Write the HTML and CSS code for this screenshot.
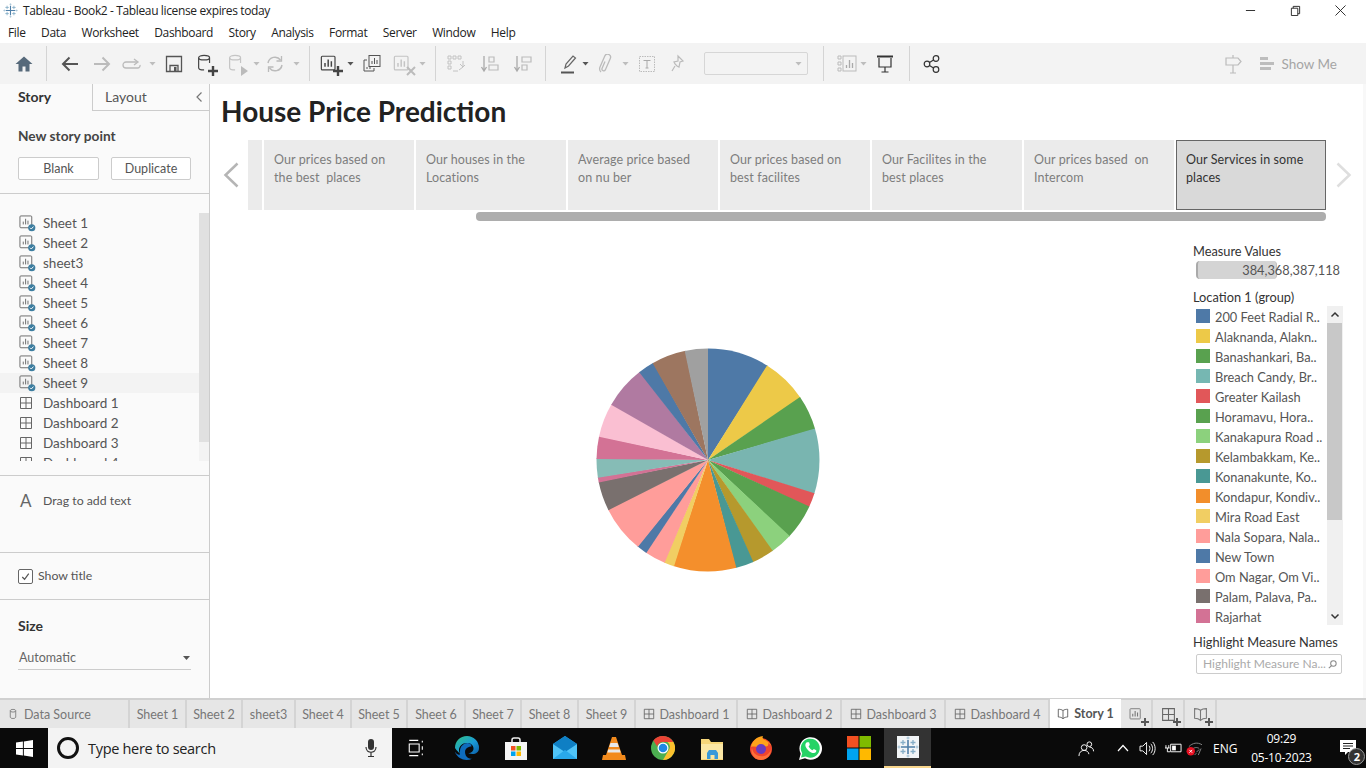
FILE: index.html
```html
<!DOCTYPE html>
<html lang="en">
<head>
<meta charset="utf-8">
<title>Tableau - Book2</title>
<link rel="stylesheet" href="styles.css">
</head>
<body>
<svg class="sprite" aria-hidden="true">
  <symbol id="sheet" viewBox="0 0 18 18"><rect x="1" y="1" width="12.5" height="12.5" rx="1" fill="none" stroke="#666"/><path d="M4.500 10V7M7 10V4M9.500 10V6" stroke="#666" fill="none"/><circle cx="13.500" cy="13.500" r="3.800" fill="#3d7ea0"/><path d="M11.700 13.500l1.300 1.300 2.300-2.500" stroke="#fff" fill="none"/></symbol>
  <symbol id="dash" viewBox="0 0 14 14"><path d="M1.500 1.500h11v11h-11zM7 1.500v11M1.500 7h11" fill="none" stroke="#666"/></symbol>
  <symbol id="ds" viewBox="0 0 20 22"><ellipse cx="9" cy="4" rx="6" ry="2.500" fill="none" stroke="currentColor" stroke-width="1.300"/><path d="M3 4v11c0 1.400 2.700 2.500 6 2.500M15 4v6" fill="none" stroke="currentColor" stroke-width="1.300"/></symbol>
  <symbol id="chart" viewBox="0 0 22 22"><rect x="1.500" y="2.500" width="15" height="15" rx="1" fill="none" stroke="currentColor" stroke-width="1.300"/><path d="M5.500 14V10M9 14V6M12.500 14V8" stroke="currentColor" stroke-width="1.600" fill="none"/></symbol>
  <symbol id="plus" viewBox="0 0 10 10"><path d="M5 0v10M0 5h10" stroke="currentColor" stroke-width="2.400" fill="none"/></symbol>
  <symbol id="book" viewBox="0 0 14 14"><path d="M7 3C5.500 1.800 3.500 1.500 1.500 1.500v9c2 0 4 .5 5.500 2 1.500-1.500 3.500-2 5.500-2v-9C10.500 1.500 8.500 1.800 7 3zM7 3v9.500" fill="none" stroke="currentColor"/></symbol>
  <symbol id="tlogo" viewBox="0 0 22 22"><path d="M11 4v14M4 11h14" stroke="#4f7fa8" stroke-width="1.600"/><path d="M6 4v5M3.500 6.500h5M16 4v5M13.500 6.500h5M6 13v5M3.500 15.500h5M16 13v5M13.500 15.500h5" stroke="#86aec8" stroke-width="1.300"/><path d="M11 .5v3M9.500 2h3M11 18.500v3M9.500 20h3M.5 11h3M2 9.500v3M18.500 11h3M20 9.500v3" stroke="#9fbfd3" stroke-width="1"/></symbol>
</svg>

<header class="titlebar">
  <svg class="app-logo" viewBox="0 0 22 22"><use href="#tlogo"/></svg>
  <span class="app-title">Tableau - Book2 - Tableau license expires today</span>
  <div class="winctl">
    <svg viewBox="0 0 12 12"><path d="M1 6h10" stroke="#222"/></svg>
    <svg viewBox="0 0 12 12"><path d="M1.500 3.500h7v8h-7zM3.500 3.500v-2h7v8h-2" fill="none" stroke="#222"/></svg>
    <svg viewBox="0 0 12 12"><path d="M.5 .5l11 11M11.500 .5l-11 11" stroke="#222"/></svg>
  </div>
</header>

<nav class="menubar">
  <span>File</span><span>Data</span><span>Worksheet</span><span>Dashboard</span><span>Story</span><span>Analysis</span><span>Format</span><span>Server</span><span>Window</span><span>Help</span>
</nav>

<div class="toolbar">
  <svg class="ti" viewBox="0 0 20 20"><path d="M10 2.500L1.500 10H4.500v7.500h4v-5h3v5h4V10h3z" fill="#56697a"/></svg>
  <i class="sep ml12"></i>
  <svg class="ti ml13" viewBox="0 0 20 20"><path d="M18 10H3M9.500 3.500L3 10l6.500 6.500" fill="none" stroke="#555" stroke-width="2"/></svg>
  <svg class="ti ml12" viewBox="0 0 20 20"><path d="M2 10h15M10.500 3.500L17 10l-6.500 6.500" fill="none" stroke="#bbb" stroke-width="2"/></svg>
  <svg class="ti ml10" viewBox="0 0 20 20"><path d="M15 8H4a2.500 2.500 0 0 0 0 6h12a2.500 2.500 0 0 0 2-3" fill="none" stroke="#bbb" stroke-width="1.300"/><path d="M12 5l4 3-4 3" fill="none" stroke="#bbb" stroke-width="1.300"/></svg>
  <i class="caret ml7"></i>
  <svg class="ti ml8" viewBox="0 0 20 20"><path d="M2.500 2.500h15v15h-15zM6 17.500v-6h8v6" fill="none" stroke="#555" stroke-width="1.300"/><path d="M10 13h2.500v4H10z" fill="#555"/></svg>
  <span class="stack ml11 dark"><svg class="ti" viewBox="0 0 20 22"><use href="#ds"/></svg><svg class="plus" viewBox="0 0 10 10"><use href="#plus"/></svg></span>
  <span class="stack ml11 faint"><svg class="ti" viewBox="0 0 20 22"><use href="#ds"/></svg><svg class="plus" viewBox="0 0 10 10"><path d="M2 0l7 5-7 5z" fill="#bbb"/></svg></span>
  <i class="caret ml7"></i>
  <svg class="ti ml5" viewBox="0 0 20 20"><path d="M3 9a7 7 0 0 1 12.500-3M17 11A7 7 0 0 1 4.500 14" fill="none" stroke="#bbb" stroke-width="1.500"/><path d="M16.500 2v5h-5M3.500 18v-5h5" fill="none" stroke="#bbb" stroke-width="1.300"/></svg>
  <i class="caret ml8"></i>
  <i class="sep ml9"></i>
  <span class="stack ml10 dark"><svg class="ti" viewBox="0 0 22 22"><use href="#chart"/></svg><svg class="plus" viewBox="0 0 10 10"><use href="#plus"/></svg></span>
  <i class="caret dk ml7"></i>
  <svg class="ti ml8" viewBox="0 0 20 20"><rect x="7" y="1.500" width="11" height="11" fill="#f3f3f3" stroke="#555"/><path d="M10 10V7M12.500 10V4M15 10V6" stroke="#555"/><path d="M5 6H2v11h10v-3" fill="none" stroke="#555"/><path d="M5 15v-2M8 15v-3" stroke="#555"/></svg>
  <span class="stack ml11 faint"><svg class="ti" viewBox="0 0 22 22"><use href="#chart"/></svg><svg class="plus" viewBox="0 0 10 10"><path d="M1 1l8 8M9 1l-8 8" stroke="#bbb" stroke-width="2"/></svg></span>
  <i class="caret ml6"></i>
  <i class="sep ml9"></i>
  <svg class="ti ml10" viewBox="0 0 20 20"><path d="M2 2h3v3H2zM7 2h3v3H7zM12 2h3v3h-3zM2 7h3v3H2zM2 12h3v3H2zM12 17h-5M17 7v6l-4 3M14 10l3 3 2-2" fill="none" stroke="#c2c2c2"/></svg>
  <svg class="ti ml14" viewBox="0 0 20 20"><path d="M4 2v14M1.500 13L4 17l2.500-4" fill="none" stroke="#aaa" stroke-width="1.300"/><path d="M9 3h5v5H9zM9 11h9v5H9z" fill="none" stroke="#bbb" stroke-width="1.200"/></svg>
  <svg class="ti ml13" viewBox="0 0 20 20"><path d="M4 2v14M1.500 13L4 17l2.500-4" fill="none" stroke="#aaa" stroke-width="1.300"/><path d="M9 3h9v5H9zM9 11h5v5H9z" fill="none" stroke="#bbb" stroke-width="1.200"/></svg>
  <i class="sep ml12"></i>
  <svg class="ti ml12" viewBox="0 0 20 20"><path d="M7 14l1-4 7-8 2.500 2-7 8z" fill="none" stroke="#666" stroke-width="1.200"/><path d="M3 18.500h13" stroke="#555" stroke-width="2"/></svg>
  <i class="caret dk ml4"></i>
  <svg class="ti ml6" viewBox="0 0 20 20"><path d="M8 8.500l-3 7a1.800 1.800 0 0 0 3.300 1.400l5-11.500a3 3 0 0 0-5.500-2.400L3 14a4.600 4.600 0 0 0 1 5" fill="none" stroke="#bbb" stroke-width="1.300" transform="translate(2 -1)"/></svg>
  <i class="caret ml7"></i>
  <svg class="ti ml8" viewBox="0 0 20 20"><rect x="2.500" y="2.500" width="15" height="15" fill="none" stroke="#bbb" stroke-dasharray="1.500 1"/><path d="M6.500 6.500h7M10 6.500v7.500M8.500 14h3" fill="none" stroke="#aaa"/></svg>
  <svg class="ti ml10" viewBox="0 0 20 20"><path d="M11 2l5 5-3 1-1 5-2-1-2-2-1-2 4-1 z M8 12l-3 5" fill="none" stroke="#bbb" stroke-width="1.200"/></svg>
  <div class="tselect ml17"><i class="caret"></i></div>
  <i class="sep ml15"></i>
  <svg class="ti ml13" viewBox="0 0 20 20"><path d="M1 2h3v3H1zM1 8h3v3H1zM1 14h3v3H1z" fill="none" stroke="#bbb"/><rect x="6" y="2" width="13" height="15" fill="none" stroke="#bbb"/><path d="M9.500 14v-3M12.500 14V6M15.500 14V9" stroke="#aaa" stroke-width="1.300"/></svg>
  <i class="caret ml3"></i>
  <svg class="ti ml8" viewBox="0 0 20 20"><path d="M2 2.500h16" stroke="#333" stroke-width="2"/><path d="M4 4v9h12V4M10 13v5M6.500 18h7" fill="none" stroke="#333" stroke-width="1.200"/></svg>
  <i class="sep ml14"></i>
  <svg class="ti ml12" viewBox="0 0 20 20"><circle cx="5" cy="10" r="2.800" fill="none" stroke="#333" stroke-width="1.200"/><circle cx="14" cy="4.500" r="2.800" fill="none" stroke="#333" stroke-width="1.200"/><circle cx="14" cy="15.500" r="2.800" fill="none" stroke="#333" stroke-width="1.200"/><path d="M7.500 8.500l4-2.500M7.500 11.500l4 2.500" stroke="#333" stroke-width="1.200"/></svg>
  <div class="tb-right">
    <svg class="ti" viewBox="0 0 20 20"><path d="M10 1v3M3 4h12l3 3.500L15 11H3zM10 11v8M7 19h6" fill="none" stroke="#bbb" stroke-width="1.200"/></svg>
    <svg class="ti ml14" viewBox="0 0 20 20"><path d="M3 3h8v3H3zM3 8h14v3H3zM3 13h11v3H3z" fill="#bdbdbd"/></svg>
    <span class="showme">Show Me</span>
  </div>
</div>

<div class="workspace">
  <aside class="panel">
    <div class="ptabs">
      <div class="ptab active">Story</div>
      <div class="ptab other">Layout<svg class="collapse" viewBox="0 0 8 12"><path d="M6.500 1.500L2 6l4.500 4.500" fill="none" stroke="#777" stroke-width="1.200"/></svg></div>
    </div>
    <section class="newpoint">
      <h3>New story point</h3>
      <div class="btns"><button class="btn">Blank</button><button class="btn">Duplicate</button></div>
    </section>
    <section class="sheets">
      <ul class="sheetlist">
        <li><svg class="sic" viewBox="0 0 18 18"><use href="#sheet"/></svg>Sheet 1</li>
        <li><svg class="sic" viewBox="0 0 18 18"><use href="#sheet"/></svg>Sheet 2</li>
        <li><svg class="sic" viewBox="0 0 18 18"><use href="#sheet"/></svg>sheet3</li>
        <li><svg class="sic" viewBox="0 0 18 18"><use href="#sheet"/></svg>Sheet 4</li>
        <li><svg class="sic" viewBox="0 0 18 18"><use href="#sheet"/></svg>Sheet 5</li>
        <li><svg class="sic" viewBox="0 0 18 18"><use href="#sheet"/></svg>Sheet 6</li>
        <li><svg class="sic" viewBox="0 0 18 18"><use href="#sheet"/></svg>Sheet 7</li>
        <li><svg class="sic" viewBox="0 0 18 18"><use href="#sheet"/></svg>Sheet 8</li>
        <li class="hover"><svg class="sic" viewBox="0 0 18 18"><use href="#sheet"/></svg>Sheet 9</li>
        <li><svg class="dic" viewBox="0 0 14 14"><use href="#dash"/></svg>Dashboard 1</li>
        <li><svg class="dic" viewBox="0 0 14 14"><use href="#dash"/></svg>Dashboard 2</li>
        <li><svg class="dic" viewBox="0 0 14 14"><use href="#dash"/></svg>Dashboard 3</li>
        <li><svg class="dic" viewBox="0 0 14 14"><use href="#dash"/></svg>Dashboard 4</li>
      </ul>
      <div class="vscroll"><div class="vthumb"></div></div>
    </section>
    <section class="dragtext"><span class="biga">A</span>Drag to add text</section>
    <section class="showtitle"><span class="check"><svg viewBox="0 0 14 14"><path d="M3.500 7.500l2.500 2.500 4.500-6" fill="none" stroke="#555" stroke-width="1.300"/></svg></span><span class="cap">Show title</span></section>
    <section class="size">
      <h3>Size</h3>
      <div class="sizesel">Automatic<i class="caret dk"></i></div>
    </section>
  </aside>

  <main class="main">
    <h1 class="story-title">House Price Prediction</h1>
    <div class="navigator">
      <svg class="arrow" viewBox="0 0 16 26"><path d="M14.500 1.500L2.500 13l12 11.500" fill="none" stroke="#b5b5b5" stroke-width="2.500"/></svg>
      <div class="tilewrap">
        <div class="tiles">
          <div class="tile stub"></div>
          <div class="tile">Our prices based on the best&nbsp; places</div>
          <div class="tile">Our houses in the Locations</div>
          <div class="tile">Average price based on nu ber</div>
          <div class="tile">Our prices based on best facilites</div>
          <div class="tile">Our Facilites in the best places</div>
          <div class="tile">Our prices based&nbsp; on Intercom</div>
          <div class="tile current">Our Services in some places</div>
        </div>
        <div class="hscroll"></div>
      </div>
      <svg class="arrow right" viewBox="0 0 16 26"><path d="M1.500 1.500L13.500 13l-12 11.500" fill="none" stroke="#dedede" stroke-width="2.500"/></svg>
    </div>
    <div class="content">
      <div class="chart">
        <svg class="pie" viewBox="0 0 224 224" role="img" aria-label="Pie chart">
          <g class="slices">
            <circle pathLength="360" class="blue" stroke-dasharray="32.4 360" stroke-dashoffset="0"/>
            <circle pathLength="360" class="yellow" stroke-dasharray="24 360" stroke-dashoffset="-32"/>
            <circle pathLength="360" class="green" stroke-dasharray="18.3 360" stroke-dashoffset="-55.6"/>
            <circle pathLength="360" class="teal" stroke-dasharray="34.3 360" stroke-dashoffset="-73.5"/>
            <circle pathLength="360" class="red" stroke-dasharray="7.7 360" stroke-dashoffset="-107.4"/>
            <circle pathLength="360" class="green" stroke-dasharray="18.6 360" stroke-dashoffset="-114.7"/>
            <circle pathLength="360" class="lgreen" stroke-dasharray="12 360" stroke-dashoffset="-132.9"/>
            <circle pathLength="360" class="olive" stroke-dasharray="11.9 360" stroke-dashoffset="-144.5"/>
            <circle pathLength="360" class="dteal" stroke-dasharray="9.6 360" stroke-dashoffset="-156"/>
            <circle pathLength="360" class="orange" stroke-dasharray="33 360" stroke-dashoffset="-165.2"/>
            <circle pathLength="360" class="lyellow" stroke-dasharray="5.5 360" stroke-dashoffset="-197.8"/>
            <circle pathLength="360" class="pink" stroke-dasharray="11.1 360" stroke-dashoffset="-202.9"/>
            <circle pathLength="360" class="blue" stroke-dasharray="5.7 360" stroke-dashoffset="-213.6"/>
            <circle pathLength="360" class="pink" stroke-dasharray="24.7 360" stroke-dashoffset="-218.9"/>
            <circle pathLength="360" class="taupe" stroke-dasharray="15.5 360" stroke-dashoffset="-243.2"/>
            <circle pathLength="360" class="rose" stroke-dasharray="2.9 360" stroke-dashoffset="-258.3"/>
            <circle pathLength="360" class="mint" stroke-dasharray="10.1 360" stroke-dashoffset="-260.8"/>
            <circle pathLength="360" class="rose" stroke-dasharray="12 360" stroke-dashoffset="-270.5"/>
            <circle pathLength="360" class="lpink" stroke-dasharray="18.1 360" stroke-dashoffset="-282.1"/>
            <circle pathLength="360" class="purple" stroke-dasharray="22.5 360" stroke-dashoffset="-299.8"/>
            <circle pathLength="360" class="blue" stroke-dasharray="8.7 360" stroke-dashoffset="-321.9"/>
            <circle pathLength="360" class="brown" stroke-dasharray="18.1 360" stroke-dashoffset="-330.2"/>
            <circle pathLength="360" class="grey" stroke-dasharray="12.1 360" stroke-dashoffset="-347.9"/>
          </g>
        </svg>
      </div>
      <aside class="legend">
        <h4 class="mv">Measure Values</h4>
        <div class="mbar"><span class="mfill"></span><span class="mval">384,368,387,118</span></div>
        <h4 class="loc">Location 1 (group)</h4>
        <div class="leglist">
          <ul class="legitems">
            <li><i class="sw blue"></i>200 Feet Radial R..</li>
            <li><i class="sw yellow"></i>Alaknanda, Alakn..</li>
            <li><i class="sw green"></i>Banashankari, Ba..</li>
            <li><i class="sw teal"></i>Breach Candy, Br..</li>
            <li><i class="sw red"></i>Greater Kailash</li>
            <li><i class="sw green"></i>Horamavu, Hora..</li>
            <li><i class="sw lgreen"></i>Kanakapura Road ..</li>
            <li><i class="sw olive"></i>Kelambakkam, Ke..</li>
            <li><i class="sw dteal"></i>Konanakunte, Ko..</li>
            <li><i class="sw orange"></i>Kondapur, Kondiv..</li>
            <li><i class="sw lyellow"></i>Mira Road East</li>
            <li><i class="sw pink"></i>Nala Sopara, Nala..</li>
            <li><i class="sw blue"></i>New Town</li>
            <li><i class="sw pink"></i>Om Nagar, Om Vi..</li>
            <li><i class="sw taupe"></i>Palam, Palava, Pa..</li>
            <li><i class="sw rose"></i>Rajarhat</li>
          </ul>
          <div class="legscroll">
            <svg class="lsb" viewBox="0 0 16 17"><path d="M4.500 10.500L8 7l3.500 3.500" fill="none" stroke="#333" stroke-width="1.500"/></svg>
            <div class="legthumb"></div>
            <svg class="lsb end" viewBox="0 0 16 17"><path d="M4.500 6.500L8 10l3.500-3.500" fill="none" stroke="#333" stroke-width="1.500"/></svg>
          </div>
        </div>
        <h4 class="hl">Highlight Measure Names</h4>
        <div class="hlinput"><span class="ph">Highlight Measure Na...</span><svg viewBox="0 0 12 12"><circle cx="7" cy="5" r="3" fill="none" stroke="#888" stroke-width="1.100"/><path d="M5 7.200L2 10" stroke="#888" stroke-width="1.200"/></svg></div>
      </aside>
    </div>
  </main>
</div>

<footer class="tabstrip">
  <div class="tab t-ds"><svg class="tic" viewBox="0 0 20 22"><ellipse cx="10" cy="5" rx="5" ry="2.500" fill="none" stroke="#777" stroke-width="1.500"/><path d="M5 5v12c0 3 10 3 10 0V5" fill="none" stroke="#777" stroke-width="1.500"/></svg>Data Source</div>
  <div class="tab t-57">Sheet 1</div>
  <div class="tab t-56">Sheet 2</div>
  <div class="tab t-53">sheet3</div>
  <div class="tab t-56">Sheet 4</div>
  <div class="tab t-56">Sheet 5</div>
  <div class="tab t-58">Sheet 6</div>
  <div class="tab t-56">Sheet 7</div>
  <div class="tab t-57">Sheet 8</div>
  <div class="tab t-57">Sheet 9</div>
  <div class="tab t-102"><svg class="tic" viewBox="0 0 14 14"><use href="#dash"/></svg>Dashboard 1</div>
  <div class="tab t-104"><svg class="tic" viewBox="0 0 14 14"><use href="#dash"/></svg>Dashboard 2</div>
  <div class="tab t-104"><svg class="tic" viewBox="0 0 14 14"><use href="#dash"/></svg>Dashboard 3</div>
  <div class="tab t-104"><svg class="tic" viewBox="0 0 14 14"><use href="#dash"/></svg>Dashboard 4</div>
  <div class="tab t-71 current"><svg class="tic dark" viewBox="0 0 14 14"><use href="#book"/></svg>Story 1</div>
  <div class="tab t-add"><span class="addic"><svg viewBox="0 0 22 22"><use href="#chart"/></svg><svg class="plus" viewBox="0 0 10 10"><use href="#plus"/></svg></span></div>
  <div class="tab t-add"><span class="addic"><svg viewBox="0 0 14 14"><use href="#dash"/></svg><svg class="plus" viewBox="0 0 10 10"><use href="#plus"/></svg></span></div>
  <div class="tab t-add"><span class="addic"><svg viewBox="0 0 14 14"><use href="#book"/></svg><svg class="plus" viewBox="0 0 10 10"><use href="#plus"/></svg></span></div>
</footer>

<div class="taskbar">
  <div class="start"><svg viewBox="0 0 18 18"><path d="M0 2.700l7.300-1v6.800H0zM8.300 1.500L18 0v8.500H8.300zM0 9.500h7.300v6.800l-7.300-1zM8.300 9.500H18V18l-9.700-1.500z" fill="#fff"/></svg></div>
  <div class="search">
    <span class="cortana"></span>
    <span class="stext">Type here to search</span>
    <svg class="mic" viewBox="0 0 12 20"><rect x="3" y="1" width="6" height="11" rx="3" fill="#333"/><path d="M1 9c0 7 10 7 10 0M6 14v4M3 18.500h6" fill="none" stroke="#333" stroke-width="1.200"/></svg>
  </div>
  <div class="apps">
    <svg class="app taskview" viewBox="0 0 20 20"><path d="M2.500 1.500h10M2.500 18.500h10M2.500 5.500h11v9h-11zM17 2v2M17 8v4M17 16v2" fill="none" stroke="#fff" stroke-width="1.200"/></svg>
    <svg class="app ml" viewBox="0 0 24 24"><defs><linearGradient id="edge" x1="0" y1="0" x2="1" y2="1"><stop offset="0" stop-color="#33c481"/><stop offset=".55" stop-color="#1a9bd8"/><stop offset="1" stop-color="#0c5fa8"/></linearGradient></defs><path d="M12 0a12 12 0 0 1 12 12c0 4-3 6-6.500 6-2.500 0-4-1-4-1 3 0 5-2 5-4.500C18.500 9 15.500 7 12 7c-5 0-8 3.500-8 7 0 1.500 .5 3 1.500 4C2 15 0 12 0 12 0 5 5 0 12 0z" fill="url(#edge)"/><path d="M5 15c0-5 4-8 7.500-8 2 0 4 1 4 3.500-3 0-8 2-6 8 .5 2 3 5 7 4-2 1-4 1.500-6 1.500-5 0-10-3-12-9 1 2 3 4 5 4 .5-1.500 .5-2 .5-4z" fill="#0f6cbd"/></svg>
    <svg class="app ml" viewBox="0 0 24 24"><path d="M8 7V4a2 2 0 0 1 2-2h4a2 2 0 0 1 2 2v3" fill="none" stroke="#eee" stroke-width="1.500"/><rect x="1" y="6" width="22" height="18" fill="#f5f5f5"/><rect x="7" y="10" width="4.500" height="4.500" fill="#f25022"/><rect x="12.500" y="10" width="4.500" height="4.500" fill="#7fba00"/><rect x="7" y="15.500" width="4.500" height="4.500" fill="#00a4ef"/><rect x="12.500" y="15.500" width="4.500" height="4.500" fill="#ffb900"/></svg>
    <svg class="app ml" viewBox="0 0 24 24"><path d="M0 8L12 0l12 8v15H0z" fill="#29a8ea"/><path d="M0 8l12 8 12-8v15H0z" fill="#4fc3f7"/><path d="M3 9l9-6 9 6-9 6z" fill="#fff"/><path d="M0 8l12 8 12-8-12-8z" fill="#0f7fc4"/><path d="M0 23l12-9 12 9z" fill="#29a8ea"/></svg>
    <svg class="app ml" viewBox="0 0 24 24"><path d="M10 1h4l6 18H4z" fill="#f28a1c"/><path d="M8.500 7h7l1.300 4H7.200zM6.200 13.500h11.600l.8 3H5.400z" fill="#e8e8e8"/><path d="M1 19h22l1 5H0z" fill="#f28a1c"/></svg>
    <svg class="app ml" viewBox="0 0 24 24"><circle cx="12" cy="12" r="12" fill="#4caf50"/><path d="M12 0a12 12 0 0 1 10.400 6H12a6 6 0 0 0-5.800 4.500L2.400 4.500A12 12 0 0 1 12 0z" fill="#ea4335"/><path d="M22.400 6A12 12 0 0 1 12 24l5.200-9a6 6 0 0 0-.8-9z" fill="#fbc02d"/><circle cx="12" cy="12" r="5.500" fill="#fff"/><circle cx="12" cy="12" r="4.300" fill="#1e88e5"/></svg>
    <svg class="app ml" viewBox="0 0 24 24"><path d="M1 3h8l2 3h12v18H1z" fill="#f6d67a"/><path d="M1 8h22v14a1 1 0 0 1-1 1H1z" fill="#fbe7a5"/><path d="M7 23v-6l2-3h7l2 3v6h-3.500v-4h-4v4z" fill="#3a9ad9"/></svg>
    <svg class="app ml" viewBox="0 0 24 24"><circle cx="12" cy="13" r="11" fill="#f0452f"/><path d="M2 11C3 5 7 1 14 0c-1 2 0 3 2 4 4 2 7 5 7 9 0-3-2-5-4-6 1 3-1 4-4 3-3 0-5 1-5 1-3 0-5-1-8 0z" fill="#ffa31a"/><circle cx="12" cy="13" r="5" fill="#6a3bbf"/><path d="M3 12c1 6 6 9 12 8 3-.5 6-3 7-7 0 6-4 11-10 11S1 18 3 12z" fill="#ff7139"/></svg>
    <svg class="app ml" viewBox="0 0 24 24"><path d="M1 24l1.700-6.200A11.300 11.300 0 1 1 7 22.300z" fill="#fff"/><path d="M3 21.500l1.200-4.300A9.500 9.500 0 1 1 7.700 20.500z" fill="#25d366"/><path d="M8.500 6.500c-1 1-1.500 2.500-.8 4.200 1 2.500 3.500 5 6 6 1.800.7 3.300.2 4.200-.8.500-.6.500-1.400.3-1.700l-2.400-1.200-1.200 1.300c-1.500-.5-3.400-2.400-4-4l1.200-1.200L11.200 6.500c-.4-.3-2-.5-2.700 0z" fill="#fff"/></svg>
    <svg class="app ml" viewBox="0 0 24 24"><rect width="11.500" height="11.500" fill="#f25022"/><rect x="12.500" width="11.500" height="11.500" fill="#7fba00"/><rect y="12.500" width="11.500" height="11.500" fill="#00a4ef"/><rect x="12.500" y="12.500" width="11.500" height="11.500" fill="#ffb900"/></svg>
    <div class="app-active"><span class="tile-ic"><svg viewBox="0 0 22 22"><use href="#tlogo"/></svg></span></div>
  </div>
  <div class="tray">
    <svg class="p" viewBox="0 0 18 18"><circle cx="6.500" cy="8" r="3" fill="none" stroke="#fff"/><circle cx="12" cy="4.500" r="2.500" fill="none" stroke="#fff"/><path d="M1 17c0-4 2.500-6 5.500-6s5 2 5 4M12 7.500c2.500 0 4.500 1.500 4.500 4.500" fill="none" stroke="#fff"/></svg>
    <svg class="chev" viewBox="0 0 12 8"><path d="M1 7l5-5.500L11 7" fill="none" stroke="#fff" stroke-width="1.200"/></svg>
    <svg class="spk" viewBox="0 0 18 16"><path d="M1 5.500h3l4-4v13l-4-4H1zM10.500 5c1.500 1.500 1.500 4.500 0 6M12.500 3c2.500 2.500 2.500 7.500 0 10M14.500 1c3.500 3.500 3.500 10.500 0 14" fill="none" stroke="#fff"/></svg>
    <svg class="bat" viewBox="0 0 18 14"><path d="M6 3h11v8H6zM1 4v3M4 4v3M0 7h5M2.500 7v4h3" fill="none" stroke="#fff"/><path d="M7.500 4.500h4v5h-4z" fill="#fff"/></svg>
    <svg class="wifi" viewBox="0 0 18 16"><path d="M9 15l2-2M6 9c3-2.500 6-2.500 8-1M3 6c4-4 9-5 14-2M11 12l3-3M13 15l3-7" fill="none" stroke="#888"/><circle cx="5" cy="11" r="4.500" fill="#e81123"/><path d="M3.500 9.500l3 3M6.500 9.500l-3 3" stroke="#fff"/></svg>
    <span class="eng">ENG</span>
    <div class="clock"><span>09:29</span><span>05-10-2023</span></div>
    <div class="notify"><svg viewBox="0 0 18 18"><path d="M1 1h16v12H9l-3 3v-3H1z" fill="#fff"/><path d="M4 4.500h10M4 7h10M4 9.500h7" stroke="#222"/></svg><span class="badge">2</span></div>
  </div>
</div>
</body>
</html>
```

FILE: styles.css
```css
* { box-sizing: border-box; }
html, body { margin: 0; padding: 0; }
body {
  width: 1366px; height: 768px; overflow: hidden;
  display: flex; flex-direction: column;
  font-family: "Lato", "Liberation Sans", sans-serif;
  background: #fff; color: #555;
}
i { display: block; font-style: normal; }
ul { list-style: none; margin: 0; padding: 0; }
h1, h3, h4 { margin: 0; }
.sprite { display: none; }

/* title + menu */
.titlebar { height: 21px; flex: none; display: flex; align-items: center; padding-left: 3px; background: #fff; }
.app-logo { width: 15px; height: 15px; margin-right: 5px; }
.app-title { font: 12px "Open Sans", sans-serif; color: #222; letter-spacing: -.37px; }
.winctl { margin-left: auto; display: flex; align-items: center; height: 21px; padding-right: 20px; gap: 34px; }
.winctl svg { width: 11px; height: 11px; }
.menubar { height: 22px; flex: none; display: flex; align-items: center; gap: 15.500px; padding-left: 8px; font: 12px "Open Sans", sans-serif; color: #222; letter-spacing: -.35px; }

/* toolbar */
.toolbar { height: 41px; flex: none; display: flex; align-items: center; padding-left: 14px; background: #f3f3f3; }
.ti { width: 20px; height: 20px; flex: none; display: block; }
.sep { width: 1px; height: 35px; background: #d4d4d4; flex: none; }
.caret { width: 7px; height: 4px; background: #bdbdbd; clip-path: polygon(0 0, 100% 0, 50% 100%); flex: none; }
.caret.dk { background: #555; }
.stack { position: relative; width: 20px; height: 20px; flex: none; display: block; }
.stack .plus { position: absolute; right: -3px; bottom: -2px; width: 10px; height: 10px; }
.stack.dark { color: #444; }
.stack.faint { color: #c4c4c4; }
.tselect { width: 104px; height: 23px; border: 1px solid #d6d6d6; border-radius: 2px; flex: none; display: flex; align-items: center; justify-content: flex-end; padding-right: 5px; }
.tb-right { margin-left: auto; display: flex; align-items: center; padding-right: 29px; }
.showme { font-size: 13.500px; color: #a5a5a5; margin-left: 4px; }
.ml3 { margin-left: 3px; } .ml4 { margin-left: 4px; } .ml5 { margin-left: 5px; } .ml6 { margin-left: 6px; }
.ml7 { margin-left: 7px; } .ml8 { margin-left: 8px; } .ml9 { margin-left: 9px; } .ml10 { margin-left: 10px; }
.ml11 { margin-left: 11px; } .ml12 { margin-left: 12px; } .ml13 { margin-left: 13px; } .ml14 { margin-left: 14px; }
.ml15 { margin-left: 15px; } .ml17 { margin-left: 17px; }

/* workspace */
.workspace { flex: 1; min-height: 0; display: flex; }
.panel { width: 210px; flex: none; background: #fafafa; border-right: 1px solid #ccc; display: flex; flex-direction: column; font-size: 13px; }
.ptabs { display: flex; height: 27px; flex: none; }
.ptab { font-size: 14px; padding-top: 4px; }
.ptab.active { width: 92px; padding-left: 18px; font-weight: 700; color: #333; }
.ptab.other { flex: 1; padding-left: 12px; border-left: 1px solid #ccc; border-bottom: 1px solid #ccc; background: #fafafa; position: relative; color: #555; }
.collapse { position: absolute; right: 6px; top: 7px; width: 8px; height: 12px; }
.newpoint { height: 83px; flex: none; border-bottom: 1px solid #ccc; padding: 16px 18px 0; }
.newpoint h3 { font-size: 13.700px; font-weight: 700; color: #444; line-height: 18px; }
.btns { display: flex; gap: 12px; margin-top: 12px; }
.btn { height: 23px; width: 81px; background: #fff; border: 1px solid #ccc; border-radius: 2px; font: 12.500px "Lato", sans-serif; color: #555; padding: 0 0 1px; }
.btns .btn:last-child { width: 80px; }
.sheets { height: 282px; flex: none; border-bottom: 1px solid #ccc; padding-top: 19px; display: flex; }
.sheetlist { flex: 1; height: 248px; overflow: hidden; }
.sheetlist li { height: 20px; display: flex; align-items: center; padding-left: 19px; font-size: 13.500px; line-height: 20px; color: #555; }
.sheetlist li.hover { background: #f3f3f3; }
.sic { width: 17px; height: 17px; margin-right: 7px; flex: none; }
.dic { width: 14px; height: 14px; margin-right: 10px; flex: none; }
.vscroll { width: 10px; height: 248px; background: #f3f3f3; }
.vthumb { height: 229px; background: #e0e0e0; }
.dragtext { height: 77px; flex: none; border-bottom: 1px solid #ccc; display: flex; align-items: flex-start; padding: 16px 0 0 20px; font-size: 12.300px; color: #555; line-height: 18px; }
.biga { font-size: 17px; width: 23px; color: #666; }
.showtitle { height: 47px; flex: none; border-bottom: 1px solid #ccc; display: flex; align-items: center; padding-left: 18px; font-size: 12.300px; }
.cap { margin-bottom: 2px; }
.check { width: 15px; height: 15px; border: 1px solid #666; border-radius: 2px; margin-right: 5px; background: #fff; }
.check svg { display: block; width: 13px; height: 13px; }
.size { padding: 16px 18px 0; }
.size h3 { font-size: 14px; color: #333; font-weight: 700; line-height: 20px; }
.sizesel { margin-top: 13px; height: 21px; width: 173px; border-bottom: 1px solid #ccc; display: flex; align-items: flex-start; justify-content: space-between; padding: 0 1px 0 1px; font-size: 12.500px; color: #666; line-height: 18px; }
.sizesel .caret { margin-top: 7px; }

/* main */
.main { flex: 1; min-width: 0; display: flex; flex-direction: column; background: #fff; border-right: 3px solid #f8f8f8; }
.story-title { font: 700 28px "Lato", sans-serif; color: #222; height: 56px; padding: 11px 0 0 11px; line-height: 32px; }
.navigator { display: flex; align-items: flex-start; height: 81px; flex: none; padding-left: 13px; }
.arrow { width: 16px; height: 26px; flex: none; margin-top: 22px; }
.arrow.right { margin-left: 10px; }
.tilewrap { margin-left: 9px; width: 1078px; }
.tiles { display: flex; gap: 2px; height: 70px; }
.tile { width: 150px; flex: none; height: 70px; background: #ebebeb; padding: 11px 16px 0 10px; font-size: 12.500px; letter-spacing: .1px; line-height: 18px; color: #7d7d7d; }
.tile.stub { width: 14px; padding: 0; }
.tile.current { background: #d9d9d9; border: 1px solid #666; padding: 10px 9px 0; color: #333; }
.hscroll { margin: 2px 0 0 228px; height: 9px; width: 850px; background: #adadad; border-radius: 4px; }
.content { flex: 1; min-height: 0; display: flex; }
.chart { flex: 1; display: flex; align-items: center; justify-content: center; padding-left: 12px; }
.pie { width: 224px; height: 224px; display: block; }
.slices { transform: rotate(-90deg); transform-origin: 112px 112px; }
.slices circle { cx: 112px; cy: 112px; r: 55.750px; stroke-width: 111.500px; fill: none; }

circle.blue { stroke: #4e79a7; } circle.yellow { stroke: #edc948; } circle.green { stroke: #59a14f; }
circle.teal { stroke: #79b5b0; } circle.red { stroke: #e15759; } circle.lgreen { stroke: #8cd17d; }
circle.olive { stroke: #b6992d; } circle.dteal { stroke: #499894; } circle.orange { stroke: #f48f2c; }
circle.lyellow { stroke: #f1ce63; } circle.pink { stroke: #ff9d9a; } circle.taupe { stroke: #79706e; }
circle.rose { stroke: #d37295; } circle.mint { stroke: #86bcb6; } circle.lpink { stroke: #fabfd2; }
circle.purple { stroke: #b07aa1; } circle.brown { stroke: #9d7660; } circle.grey { stroke: #a0a0a0; }
.sw.blue { background: #4e79a7; } .sw.yellow { background: #edc948; } .sw.green { background: #59a14f; }
.sw.teal { background: #76b7b2; } .sw.red { background: #e15759; } .sw.lgreen { background: #8cd17d; }
.sw.olive { background: #b6992d; } .sw.dteal { background: #499894; } .sw.orange { background: #f28e2b; }
.sw.lyellow { background: #f1ce63; } .sw.pink { background: #ff9d9a; } .sw.taupe { background: #79706e; }
.sw.rose { background: #d37295; }

/* legend */
.legend { width: 170px; flex: none; padding: 22px 0 0; }
.legend h4 { font-size: 12.800px; font-weight: 400; color: #333; line-height: 18px; height: 18px; }
.legend .mv { line-height: 16px; }
.mbar { position: relative; margin: 0 0 0 3px; width: 144px; height: 18px; }
.mfill { display: block; width: 81px; height: 18px; background: #d4d4d4; border-left: 2px solid #aaa; border-right: 1px solid #c0c0c0; border-radius: 4px; }
.mval { position: absolute; right: 0; top: 0; line-height: 18px; font-size: 12.800px; color: #555; }
.legend .loc { margin-top: 9px; }
.leglist { display: flex; margin: 0 0 0 3px; height: 319px; width: 147px; }
.legitems { flex: 1; overflow: hidden; }
.legitems li { height: 20px; display: flex; align-items: center; padding-top: 2px; font-size: 12.800px; color: #555; white-space: nowrap; }
.sw { width: 14px; height: 14px; margin: 0 5px 2px 0; flex: none; }
.legscroll { width: 16px; background: #f0f0f0; flex: none; height: 319px; display: flex; flex-direction: column; }
.lsb { width: 16px; height: 17px; flex: none; display: block; }
.lsb.end { margin-top: auto; }
.legthumb { height: 197px; width: 15px; background: #c8c8c8; }
.legend .hl { margin-top: 8px; line-height: 18px; }
.hlinput { margin: 3px 0 0 3px; width: 146px; height: 20px; background: #fff; border: 1px solid #ccc; border-radius: 2px; font-size: 12px; color: #aaa; padding: 0 3px 0 6px; display: flex; align-items: center; justify-content: space-between; white-space: nowrap; }
.ph { padding-bottom: 2px; }
.hlinput svg { width: 11px; height: 11px; }

/* tabs */
.tabstrip { height: 30px; flex: none; display: flex; background: #e6e6e6; border-top: 2px solid #d0d0d0; }
.tab { height: 28px; flex: none; display: flex; align-items: center; justify-content: center; font-size: 12.500px; color: #777; border-right: 2px solid #d4d4d4; white-space: nowrap; }
.tic { width: 12px; height: 12px; margin-right: 5px; flex: none; }
.tic.dark { color: #555; }
.t-ds { width: 130px; justify-content: flex-start; padding-left: 7px; }
.t-53 { width: 53px; } .t-56 { width: 56px; } .t-57 { width: 57px; } .t-58 { width: 58px; }
.t-102 { width: 102px; } .t-104 { width: 104px; }
.t-71 { width: 71px; }
.tab.current { background: #fff; font-weight: 700; color: #555; margin-top: -1px; height: 29px; border-right: 0; }
.t-add { width: 32px; }
.addic { position: relative; width: 15px; height: 15px; display: block; color: #777; }
.addic svg { width: 15px; height: 15px; display: block; }
.addic .plus { position: absolute; right: -5px; bottom: -4px; width: 8px; height: 8px; color: #555; }

/* taskbar */
.taskbar { height: 40px; flex: none; background: #0a0a0a; display: flex; align-items: center; }
.start { width: 48px; height: 40px; display: flex; align-items: center; justify-content: center; }
.start svg { width: 17px; height: 17px; }
.search { width: 344px; height: 40px; background: #f3f3f3; display: flex; align-items: center; padding-left: 9px; }
.cortana { width: 22px; height: 22px; border: 3px solid #111; border-radius: 50%; flex: none; }
.stext { font: 14.500px "Open Sans", sans-serif; letter-spacing: -.3px; color: #222; margin-left: 9px; }
.mic { width: 12px; height: 20px; margin-left: auto; margin-right: 15px; }
.apps { display: flex; align-items: center; height: 40px; padding-left: 15px; }
.app { width: 24px; height: 24px; flex: none; display: block; }
.app.taskview { width: 18px; height: 18px; }
.app.ml { margin-left: 25px; }
.apps .app.taskview + .app.ml { margin-left: 30px; }
.app-active { width: 47px; height: 40px; margin-left: 13px; background: #333; border-bottom: 2px solid #f8d68c; display: flex; align-items: center; justify-content: center; }
.tile-ic { width: 22px; height: 22px; background: #f2f5f7; display: block; }
.tile-ic svg { width: 22px; height: 22px; display: block; }
.tray { flex: 1; display: flex; align-items: center; height: 40px; color: #fff; position: relative; }
.p { width: 17px; height: 17px; margin-left: 147px; flex: none; }
.chev { width: 12px; height: 8px; margin-left: 22px; flex: none; }
.spk { width: 17px; height: 15px; margin-left: 10px; flex: none; }
.bat { width: 17px; height: 14px; margin-left: 9px; flex: none; }
.wifi { width: 17px; height: 15px; margin-left: 4px; flex: none; }
.eng { font: 12px "Open Sans", sans-serif; margin-left: 10px; }
.clock { display: flex; flex-direction: column; align-items: center; font: 12px/19px "Open Sans", sans-serif; margin-left: 11px; letter-spacing: -.2px; width: 66px; }
.notify { position: relative; margin-left: 25px; width: 18px; height: 18px; }
.notify svg { width: 18px; height: 18px; display: block; }
.badge { position: absolute; right: -8px; bottom: -8px; width: 17px; height: 17px; border-radius: 50%; background: #333; border: 1px solid #999; font: 700 11px/15px "Open Sans", sans-serif; text-align: center; color: #fff; }
```
